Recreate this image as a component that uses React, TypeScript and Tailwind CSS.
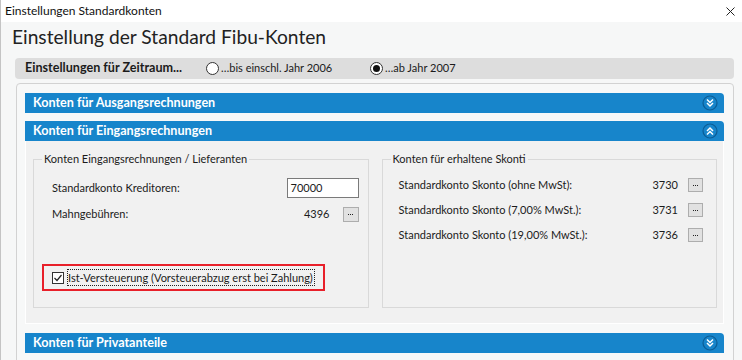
import React from "react";

const font = "font-['Lato','Liberation_Sans',sans-serif]";

function Chevrons({ up }: { up?: boolean }) {
  // round toggle icon at the right end of a section header
  return (
    <svg width="16" height="16" viewBox="0 0 16 16">
      <circle cx="8" cy="8" r="7" fill="none" stroke="#0b5d96" strokeWidth="1.2" />
      {up ? (
        <g fill="none" stroke="#fff" strokeWidth="1.5">
          <polyline points="5,8 8,5 11,8" />
          <polyline points="5,11.5 8,8.5 11,11.5" />
        </g>
      ) : (
        <g fill="none" stroke="#fff" strokeWidth="1.5">
          <polyline points="5,4.5 8,7.5 11,4.5" />
          <polyline points="5,8 8,11 11,8" />
        </g>
      )}
    </svg>
  );
}

function SectionHeader({ title, open }: { title: string; open?: boolean }) {
  return (
    <div className="h-[20px] bg-[#1785cb] rounded-tr-[4px] flex items-center justify-between pl-[8px] pr-[6px]">
      <span className="text-white font-bold text-[12.6px]">{title}</span>
      <Chevrons up={open} />
    </div>
  );
}

function DotsButton({ w = 16, h = 15 }: { w?: number; h?: number }) {
  return (
    <div
      className="bg-[#e1e1e1] border border-[#adadad] flex items-center justify-center gap-[1px]"
      style={{ width: w, height: h }}
    >
      <span className="w-[1px] h-[1px] bg-[#222]" />
      <span className="w-[1px] h-[1px] bg-[#222]" />
      <span className="w-[1px] h-[1px] bg-[#222]" />
    </div>
  );
}

function Radio({ checked }: { checked?: boolean }) {
  return (
    <span className="w-[13px] h-[13px] rounded-full border border-[#333] bg-white flex items-center justify-center">
      {checked && <span className="w-[7px] h-[7px] rounded-full bg-[#111]" />}
    </span>
  );
}

function SkontoRow({ label, value }: { label: string; value: string }) {
  return (
    <div className="h-[20px] flex items-center">
      <span className="flex-1">{label}</span>
      <span>{value}</span>
      <div className="ml-[10px]">
        <DotsButton w={15} h={14} />
      </div>
    </div>
  );
}

export default function App() {
  return (
    <div
      className={`w-[742px] h-[360px] overflow-hidden bg-[#f6f7f7] border-l border-[#c4c4c4] text-[11px] text-[#1b1b1b] ${font}`}
    >
      {/* window title bar */}
      <div className="h-[22px] bg-white flex items-center justify-between pl-[4px] pr-[7px]">
        <span className="text-[12px] text-[#111]">Einstellungen Standardkonten</span>
        <svg width="9" height="9" viewBox="0 0 9 9">
          <path d="M0.5 0.5 L8.5 8.5 M8.5 0.5 L0.5 8.5" stroke="#222" strokeWidth="1" />
        </svg>
      </div>

      <div className="mt-[3px] h-[24px] pl-[11px] text-[19.2px] leading-[24px] text-[#222]">
        Einstellung der Standard Fibu-Konten
      </div>

      {/* period selection */}
      <div className="mt-[9px] ml-[14px] w-[719px] h-[21px] rounded-[4px] bg-[#dddddd] flex items-center pl-[10px]">
        <span className="w-[181px] font-bold text-[12.6px]">Einstellungen für Zeitraum...</span>
        <Radio />
        <span className="ml-[2px] w-[149px]">…bis einschl. Jahr 2006</span>
        <Radio checked />
        <span className="ml-[2px]">…ab Jahr 2007</span>
      </div>

      {/* sections */}
      <div className="mt-[4px] ml-[15px] w-[718px] h-[300px] border border-[#d2d2d2] rounded-t-[4px] bg-[#f7f8f8] pt-[9px] pl-[8px] pr-[9px]">
        <SectionHeader title="Konten für Ausgangsrechnungen" />
        <div className="mt-[8px]">
          <SectionHeader title="Konten für Eingangsrechnungen" open />
        </div>
        <div className="h-[183px] bg-[#f1f1f1] border-x border-b border-white pt-[10px] pl-[7px] pr-[6px] flex gap-[13px]">
          <fieldset className="w-[336px] h-[157px] border border-[#d9d9d9] pl-[18px] pr-[9px]">
            <legend className="ml-[-10px] px-[2px] leading-[16px]">
              Konten Eingangsrechnungen / Lieferanten
            </legend>
            <div className="mt-[11px] h-[20px] flex items-center">
              <span className="flex-1">Standardkonto Kreditoren:</span>
              <div className="w-[72px] h-[20px] bg-white border border-[#7a7a7a] pl-[3px] flex items-center">
                70000
              </div>
            </div>
            <div className="mt-[6px] h-[20px] flex items-center">
              <span className="flex-1">Mahngebühren:</span>
              <span>4396</span>
              <div className="ml-[13px]">
                <DotsButton />
              </div>
            </div>
            <div className="mt-[40px] ml-[-10px] w-[283px] h-[27px] border-2 border-[#e8202a] flex items-center pl-[8px]">
              <span className="w-[12px] h-[12px] border border-[#333] bg-white flex items-center justify-center">
                <svg width="10" height="10" viewBox="0 0 10 10">
                  <polyline points="1.5,5 4,7.5 8.5,2" fill="none" stroke="#222" strokeWidth="1.2" />
                </svg>
              </span>
              <span className="ml-[3px] border border-dotted border-[#222] leading-[15px] pr-[1px] whitespace-nowrap">
                Ist-Versteuerung (Vorsteuerabzug erst bei Zahlung)
              </span>
            </div>
          </fieldset>
          <fieldset className="w-[336px] h-[157px] border border-[#d9d9d9] pl-[16px] pr-[13px]">
            <legend className="ml-[-8px] px-[2px] leading-[16px]">Konten für erhaltene Skonti</legend>
            <div className="mt-[8px] flex flex-col gap-[5px]">
              <SkontoRow label="Standardkonto Skonto (ohne MwSt):" value="3730" />
              <SkontoRow label="Standardkonto Skonto (7,00% MwSt.):" value="3731" />
              <SkontoRow label="Standardkonto Skonto (19,00% MwSt.):" value="3736" />
            </div>
          </fieldset>
        </div>
        <div className="mt-[9px]">
          <SectionHeader title="Konten für Privatanteile" />
        </div>
      </div>
    </div>
  );
}
